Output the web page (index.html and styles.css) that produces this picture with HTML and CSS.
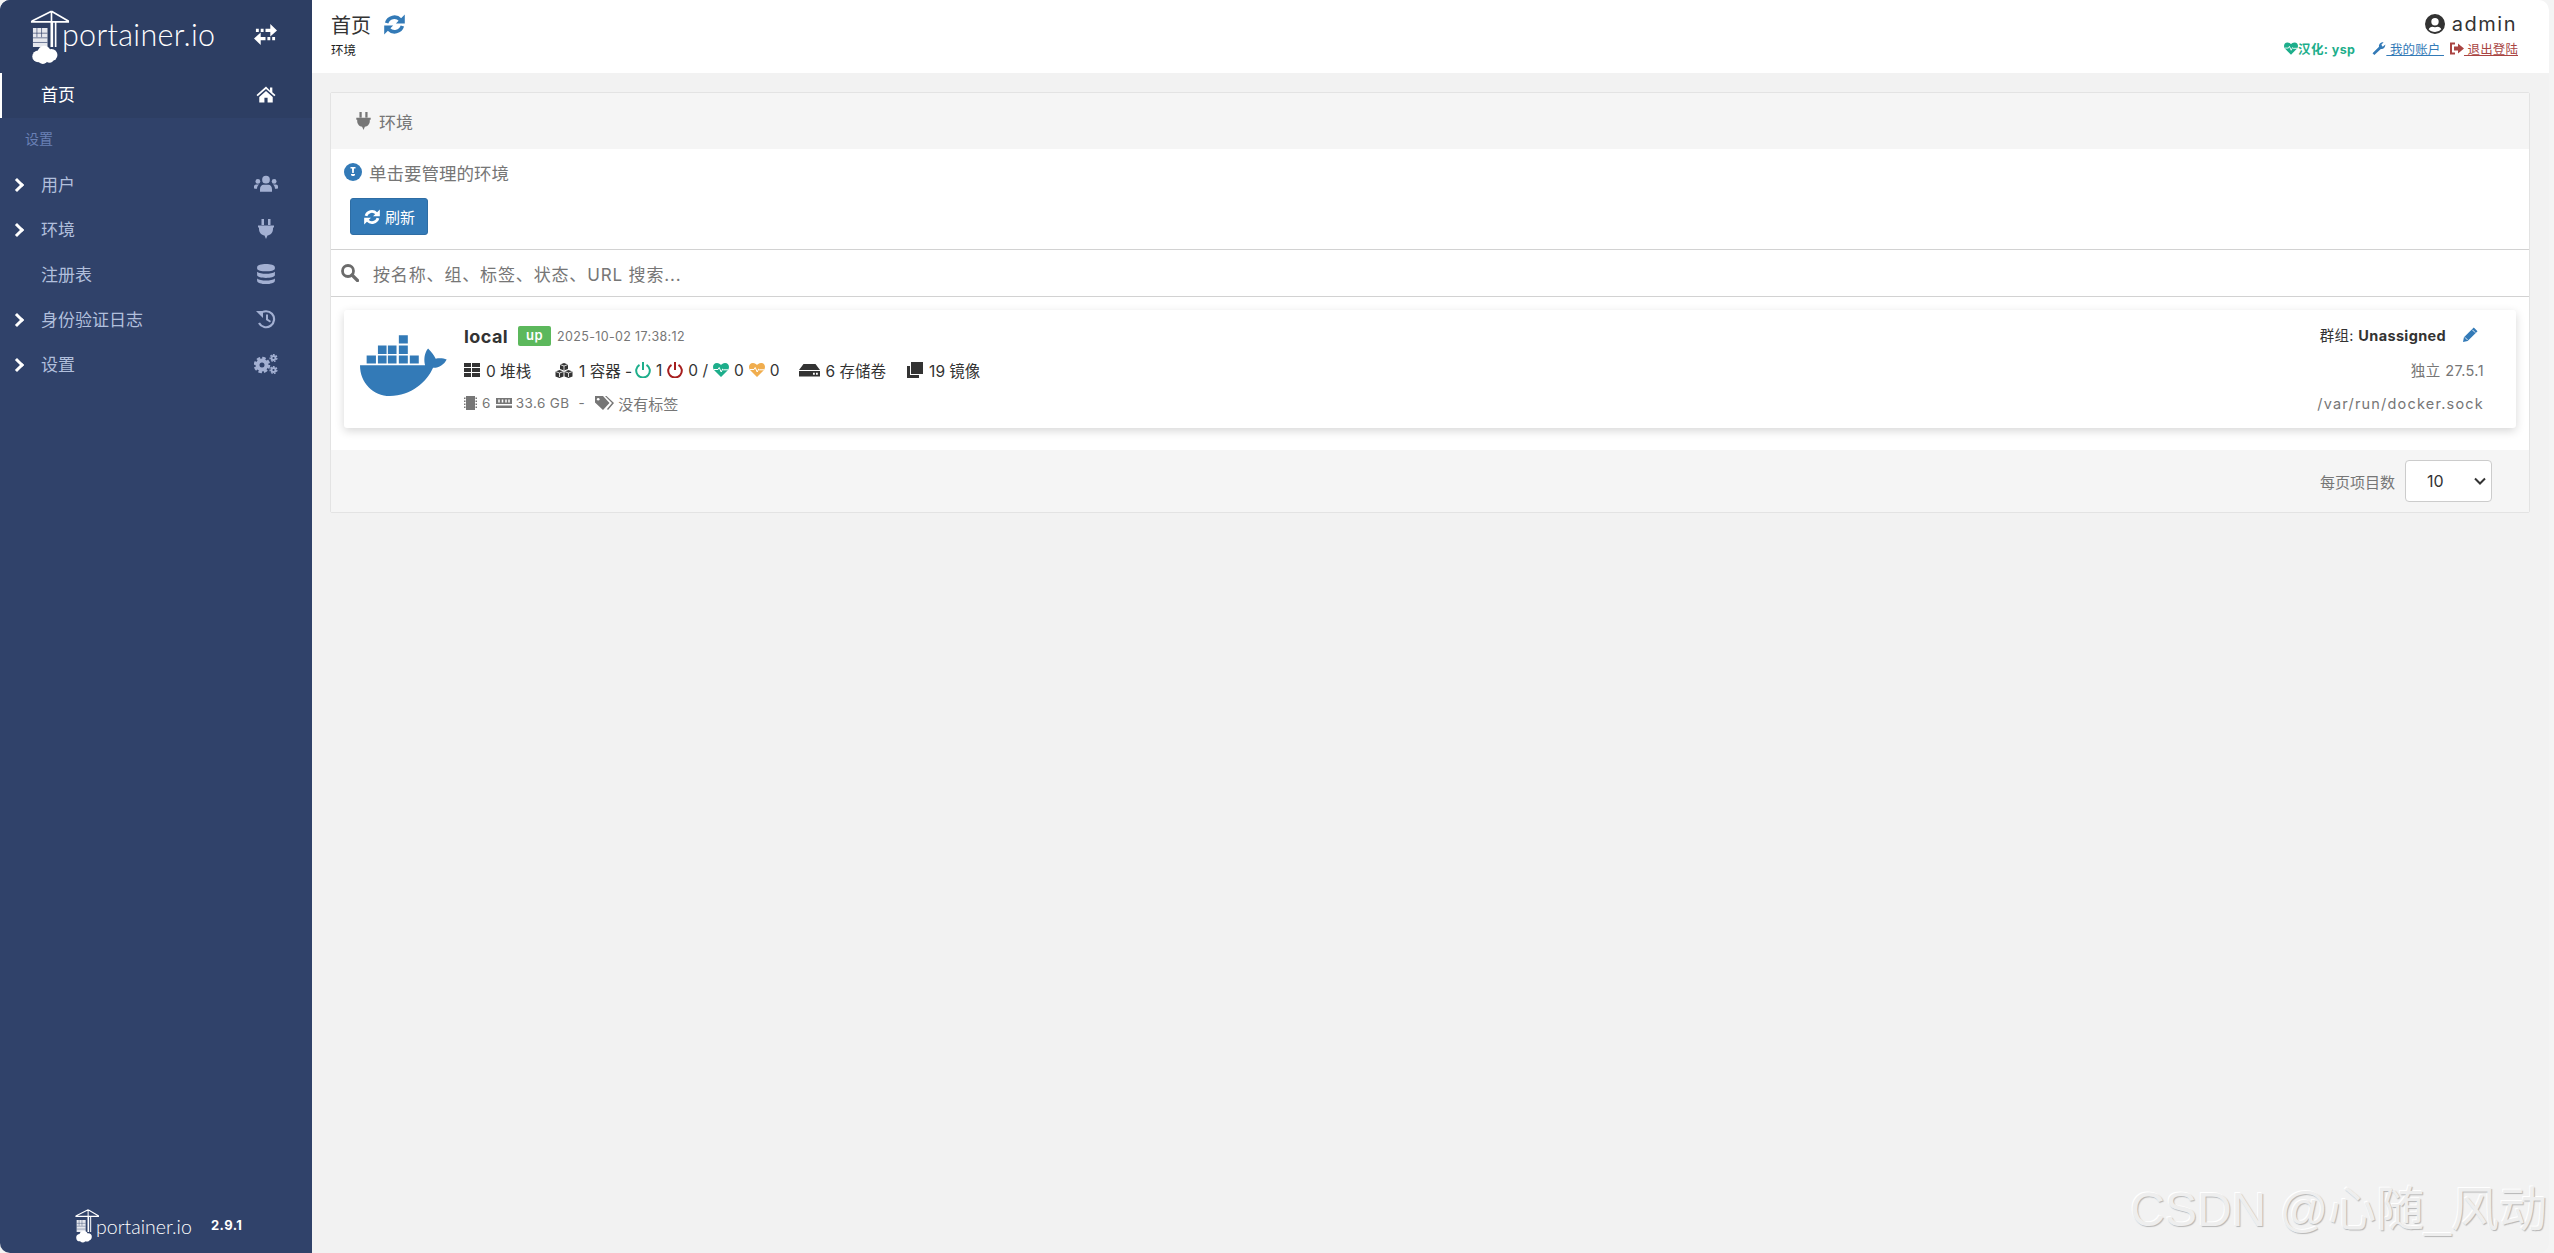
FILE: index.html
```html
<!DOCTYPE html>
<html lang="zh">
<head>
<meta charset="utf-8">
<title>Portainer</title>
<link rel="stylesheet" href="styles.css">
</head>
<body>
<svg class="sprite" xmlns="http://www.w3.org/2000/svg">
  <symbol id="i-crane" viewBox="88 14 122 166">
    <path d="M90 50h115M152 18 92 48M152 18l52 30M152 18v30" fill="none" stroke="#fff" stroke-width="5"/>
    <path d="M149 50h8v76h-8zM162 50h5v76h-5z" fill="#fff"/>
    <path d="M96 68h44v58H96z" fill="#e6e8ee"/>
    <path d="M108 68v28M122 68v28M96 84h44M96 98h44M96 112h44" stroke="#30426a" stroke-width="2" fill="none"/>
    <g fill="#fff"><circle cx="112" cy="154" r="18"/><circle cx="130" cy="142" r="20"/><circle cx="152" cy="150" r="18"/><circle cx="126" cy="162" r="15"/><circle cx="146" cy="160" r="13"/></g>
  </symbol>
  <symbol id="i-exchange" viewBox="0 0 24 24">
    <path d="M2 6h3v3.500H2zM7 6h3v3.500H7zM12 6h5V1l7 6.700-7 6.300V9.500h-5zM22 14.500h-3V18h3zM17 14.500h-3V18h3zM12 14.500H7V10L0 16.300 7 23v-5h5z" fill="currentColor"/>
  </symbol>
  <symbol id="i-home" viewBox="0 0 24 24">
    <path d="M12 2 0 12.500l1.500 1.800L12 5.200l10.500 9.100 1.500-1.800-4-3.500V3h-3v3.800z" fill="currentColor"/>
    <path d="M12 7.500 3.500 15v7H10v-6h4v6h6.500v-7z" fill="currentColor"/>
  </symbol>
  <symbol id="i-users" viewBox="0 0 28 20">
    <circle cx="14" cy="5" r="4.500" fill="currentColor"/><circle cx="4.500" cy="7" r="2.800" fill="currentColor"/><circle cx="23.500" cy="7" r="2.800" fill="currentColor"/>
    <path d="M7 19v-3c0-3 2-5 4-5h6c2 0 4 2 4 5v3zM0 15v-2c0-1.500 1-2.500 2.500-2.500H6c-1.500 1-2.500 3-2.500 5H1zM28 15v-2c0-1.500-1-2.500-2.500-2.500H22c1.500 1 2.500 3 2.500 5H27z" fill="currentColor"/>
  </symbol>
  <symbol id="i-plug" viewBox="0 0 16 20">
    <path d="M3.500 0H6v6H3.500zM10 0h2.500v6H10zM0 6.500h16V8.500h-1V10c0 3.500-2.500 6-5.500 6.500L8 20l-1.500-3.500C3.500 16 1 13.500 1 10V8.500H0z" fill="currentColor"/>
  </symbol>
  <symbol id="i-db" viewBox="0 0 16 18">
    <path d="M0 3c0-4 16-4 16 0v1c0 3.500-16 3.500-16 0zM0 7c3 2.500 13 2.500 16 0v3c0 3.500-16 3.500-16 0zM0 13c3 2.500 13 2.500 16 0v2c0 4-16 4-16 0z" fill="currentColor"/>
  </symbol>
  <symbol id="i-history" viewBox="0 0 20 20">
    <path d="M4 5a8 8 0 1 1-1 9" fill="none" stroke="currentColor" stroke-width="2.200"/>
    <path d="M0 2h7v7zM10 5.500h2V10l3 2-1 1.500-4-2.500z" fill="currentColor"/>
  </symbol>
  <symbol id="i-cogs" viewBox="0 0 24 20">
    <circle cx="8" cy="11" r="4.500" fill="none" stroke="currentColor" stroke-width="4"/>
    <circle cx="8" cy="11" r="7" fill="none" stroke="currentColor" stroke-width="2.500" stroke-dasharray="3.500 2"/>
    <circle cx="19.500" cy="4" r="2" fill="none" stroke="currentColor" stroke-width="1.800"/>
    <circle cx="19.500" cy="4" r="3.400" fill="none" stroke="currentColor" stroke-width="1.300" stroke-dasharray="1.800 1.200"/>
    <circle cx="19.500" cy="16" r="2" fill="none" stroke="currentColor" stroke-width="1.800"/>
    <circle cx="19.500" cy="16" r="3.400" fill="none" stroke="currentColor" stroke-width="1.300" stroke-dasharray="1.800 1.200"/>
  </symbol>
  <symbol id="i-refresh" viewBox="0 0 20 20">
    <path d="M2.500 8.500A7.700 7.700 0 0 1 15.500 5.500M17.500 11.500A7.700 7.700 0 0 1 4.500 14.500" fill="none" stroke="currentColor" stroke-width="3.400"/>
    <path d="M19.800.5v8.500H11.300zM.2 19.500V11H8.700z" fill="currentColor"/>
  </symbol>
  <symbol id="i-info" viewBox="0 0 18 18">
    <circle cx="9" cy="9" r="9" fill="currentColor"/>
    <path d="M6.500 4h5v1.500h-1.500L9.800 10H8.200L8 5.500H6.500zM7 11h4v1.500h-1V13H8v-.5H7z" fill="#fff"/>
  </symbol>
  <symbol id="i-search" viewBox="0 0 18 18">
    <circle cx="7" cy="7" r="5.500" fill="none" stroke="currentColor" stroke-width="2.800"/>
    <path d="m11 11 5.500 5.500" stroke="currentColor" stroke-width="3.200" stroke-linecap="round"/>
  </symbol>
  <symbol id="i-th" viewBox="0 0 16 14">
    <path d="M0 0h7v4H0zM8 0h8v4H8zM0 5h7v4H0zM8 5h8v4H8zM0 10h7v4H0zM8 10h8v4H8z" fill="currentColor"/>
  </symbol>
  <symbol id="i-cubes" viewBox="0 0 18 15">
    <path d="M9 0l4 1.500v4.500L9 7.500 5 6V1.500zM4.500 7 8.500 8.500v5L4.500 15 .5 13.500v-5zM13.500 7l4 1.500v5l-4 1.500-4-1.500v-5z" fill="currentColor"/>
    <path d="M5 1.500 9 3l4-1.500M.5 8.500l4 1.500 4-1.500M9.500 8.500l4 1.500 4-1.500M9 3v4M4.500 10v4M13.500 10v4" stroke="#fff" stroke-width=".8" fill="none"/>
  </symbol>
  <symbol id="i-power" viewBox="0 0 16 16">
    <path d="M4.500 2.800a6.800 6.800 0 1 0 7 0" fill="none" stroke="currentColor" stroke-width="2"/>
    <path d="M8 0v8" stroke="currentColor" stroke-width="2"/>
  </symbol>
  <symbol id="i-heart" viewBox="0 0 16 14">
    <path d="M8 14 1 7C-1 4.500 0 0 4 0c2 0 3 1 4 2 1-1 2-2 4-2 4 0 5 4.500 3 7z" fill="currentColor"/>
    <path d="M1 6.500h4l1.200-2 2 4.500 1.500-3 .8.800H15" fill="none" stroke="#fff" stroke-width="1"/>
  </symbol>
  <symbol id="i-hdd" viewBox="0 0 21 14">
    <path d="M4.500 1h12L21 7H0zM0 8h21v5.500H0zM14 9.800v2h1.800v-2zM17 9.800v2h1.800v-2z" fill="currentColor" fill-rule="evenodd"/>
  </symbol>
  <symbol id="i-clone" viewBox="0 0 16 16">
    <path d="M4 0h12v12H4zM0 4h3v9h9v3H0z" fill="currentColor"/>
  </symbol>
  <symbol id="i-chip" viewBox="0 0 13 14">
    <path d="M2 0h9v14H2zM0 1.500h1.500v1.500H0zM0 4.500h1.500V6H0zM0 7.500h1.500V9H0zM0 10.500h1.500V12H0zM11.500 1.500H13v1.500h-1.500zM11.500 4.500H13V6h-1.500zM11.500 7.500H13V9h-1.500zM11.500 10.500H13V12h-1.500z" fill="currentColor"/>
  </symbol>
  <symbol id="i-memory" viewBox="0 0 16 10">
    <path d="M0 0h16v6H0zM0 7.500h16V10H0z" fill="currentColor"/>
    <path d="M3 1.500v3M6.500 1.500v3M10 1.500v3M13 1.500v3" stroke="#fff" stroke-width="1.500"/>
  </symbol>
  <symbol id="i-tags" viewBox="0 0 19 14">
    <path d="M0 0h8l6.500 7-6.500 7L0 6.500zM10 0h1.500L19 7l-6 7-1-1 5-6z" fill="currentColor"/>
    <circle cx="3.200" cy="3.200" r="1.300" fill="#fff"/>
  </symbol>
  <symbol id="i-pencil" viewBox="0 0 16 16">
    <path d="M11.500.5 15.500 4.500 5 15 0 16l1-5zM10 3.500l2.500 2.500" fill="currentColor"/>
    <path d="m10 3 3 3M2 11l3 3" stroke="#fff" stroke-width=".9"/>
  </symbol>
  <symbol id="i-wrench" viewBox="0 0 14 14">
    <path d="M0 12 7 5C6.500 2 9 0 12 .2L9.500 3l1.500 2 2.800-2.300C14 6 11.500 8 9 7.500L2 14z" fill="currentColor"/>
  </symbol>
  <symbol id="i-signout" viewBox="0 0 14 12">
    <path d="M5 0v2H2v8h3v2H0V0zM8 1l6 5-6 5V8H4V4h4z" fill="currentColor"/>
  </symbol>
  <symbol id="i-user" viewBox="0 0 20 20">
    <path d="M10 0a10 10 0 1 0 0 20 10 10 0 0 0 0-20zm0 4a3.700 3.700 0 1 1 0 7.400A3.700 3.700 0 0 1 10 4zm0 14c-2.500 0-4.800-1-6.300-2.800.6-1.500 2-2.500 3.500-2.500.9.300 1.800.5 2.800.5s1.900-.2 2.800-.5c1.500 0 2.900 1 3.500 2.500A8.300 8.300 0 0 1 10 18z" fill="currentColor" fill-rule="evenodd"/>
  </symbol>
  <symbol id="i-docker" viewBox="90 107 262 185">
    <path d="M207 107h27v25h-27zM144 138h26v25h-26zM174 138h26v25h-26zM207 138h27v25h-27zM110 168h28v24h-28zM144 168h26v24h-26zM174 168h26v24h-26zM207 168h27v24h-27zM240 168h27v24h-27z" fill="#337ab7"/>
    <path d="M90 197h196c-4-14-3-36 9-50 8 8 18 20 23 31 12-3 24-1 33 2-8 16-24 26-41 25-18 42-66 85-130 85-50 0-90-40-90-93z" fill="#337ab7"/>
  </symbol>
</svg>

<div class="app">
  <aside class="sidebar">
    <div class="brand">
      <div class="logo">
        <svg class="logo-mark"><use href="#i-crane"/></svg>
        <span class="logo-text">portainer.io</span>
      </div>
      <svg class="swap"><use href="#i-exchange"/></svg>
    </div>
    <nav class="nav">
      <a class="nav-item nav-active"><span class="nav-label">首页</span><svg class="nav-icon nav-home"><use href="#i-home"/></svg></a>
      <div class="nav-title">设置</div>
      <a class="nav-item"><span class="chev"></span><span class="nav-label">用户</span><svg class="nav-icon"><use href="#i-users"/></svg></a>
      <a class="nav-item"><span class="chev"></span><span class="nav-label">环境</span><svg class="nav-icon"><use href="#i-plug"/></svg></a>
      <a class="nav-item"><span class="nav-label">注册表</span><svg class="nav-icon"><use href="#i-db"/></svg></a>
      <a class="nav-item"><span class="chev"></span><span class="nav-label">身份验证日志</span><svg class="nav-icon"><use href="#i-history"/></svg></a>
      <a class="nav-item"><span class="chev"></span><span class="nav-label">设置</span><svg class="nav-icon"><use href="#i-cogs"/></svg></a>
    </nav>
    <div class="side-foot">
      <svg class="foot-mark"><use href="#i-crane"/></svg>
      <span class="foot-text">portainer.io</span>
      <span class="foot-ver">2.9.1</span>
    </div>
  </aside>

  <main class="main">
    <header class="topbar">
      <div class="crumbs">
        <div class="crumb-title"><span>首页</span><svg class="crumb-refresh"><use href="#i-refresh"/></svg></div>
        <div class="crumb-sub">环境</div>
      </div>
      <div class="account">
        <div class="account-user"><svg class="user-icon"><use href="#i-user"/></svg><span>admin</span></div>
        <div class="account-links">
          <span class="credit"><svg class="ico-12"><use href="#i-heart"/></svg>汉化: ysp</span>
          <a class="link-blue"><svg class="ico-12"><use href="#i-wrench"/></svg> 我的账户 </a>
          <a class="link-red"><svg class="ico-12"><use href="#i-signout"/></svg> 退出登陆</a>
        </div>
      </div>
    </header>

    <section class="content">
      <div class="widget">
        <div class="widget-head"><svg class="head-icon"><use href="#i-plug"/></svg><span>环境</span></div>
        <div class="widget-intro">
          <div class="hint"><svg class="hint-icon"><use href="#i-info"/></svg><span>单击要管理的环境</span></div>
          <button class="btn"><svg class="btn-icon"><use href="#i-refresh"/></svg><span>刷新</span></button>
        </div>
        <div class="searchbar"><svg class="search-icon"><use href="#i-search"/></svg><span>按名称、组、标签、状态、URL 搜索...</span></div>
        <div class="list">
          <article class="card">
            <svg class="docker"><use href="#i-docker"/></svg>
            <div class="card-main">
              <div class="row-a"><span class="name">local</span><span class="badge">up</span><span class="stamp">2025-10-02 17:38:12</span></div>
              <div class="row-b">
                <span class="stat stat-stack"><svg class="s16"><use href="#i-th"/></svg>0 堆栈</span>
                <span class="stat stat-cont"><svg class="s18"><use href="#i-cubes"/></svg>1 容器 -</span>
                <svg class="s16 green"><use href="#i-power"/></svg><span class="mini">1</span>
                <svg class="s16 red"><use href="#i-power"/></svg><span class="mini">0 /</span>
                <svg class="s16 green"><use href="#i-heart"/></svg><span class="mini">0</span>
                <svg class="s16 amber"><use href="#i-heart"/></svg><span class="mini mini-last">0</span>
                <span class="stat stat-vol"><svg class="s21"><use href="#i-hdd"/></svg>6 存储卷</span>
                <span class="stat"><svg class="s16"><use href="#i-clone"/></svg>19 镜像</span>
              </div>
              <div class="row-c">
                <svg class="s13"><use href="#i-chip"/></svg><span class="c-6">6</span>
                <svg class="s16m"><use href="#i-memory"/></svg><span class="c-mem">33.6 GB</span>
                <span class="c-dash">-</span>
                <svg class="s18t"><use href="#i-tags"/></svg><span class="c-tag">没有标签</span>
              </div>
            </div>
            <div class="card-side">
              <div class="group"><span>群组: <b>Unassigned</b></span><svg class="pencil"><use href="#i-pencil"/></svg></div>
              <div class="side-line">独立 27.5.1</div>
              <div class="side-line side-sock">/var/run/docker.sock</div>
            </div>
          </article>
        </div>
        <div class="widget-foot">
          <span class="per-page">每页项目数</span>
          <div class="select"><span>10</span><svg class="caret" viewBox="0 0 12 8"><path d="M1 1.500 6 6.500l5-5" fill="none" stroke="currentColor" stroke-width="2"/></svg></div>
        </div>
      </div>
    </section>
    <div class="watermark">CSDN @心随_风动</div>
  </main>
</div>
</body>
</html>
```
FILE: styles.css
```css
* { box-sizing: border-box; }
html, body { margin: 0; height: 100%; }
html { background: #f4f4f4; }
body {
  font-family: Inter, "Noto Sans CJK SC", sans-serif;
  color: #333;
  overflow: hidden;
}
.sprite { display: none; }
svg { display: block; flex: none; }

.app {
  display: flex;
  height: 1253px;
  width: 2549px;
  border-radius: 10px;
  overflow: hidden;
  background: #f2f2f2;
}

/* sidebar */
.sidebar {
  width: 312px;
  flex: none;
  background: #30426a;
  display: flex;
  flex-direction: column;
}
.brand {
  height: 73px;
  background: #2d3e63;
  display: flex;
  align-items: center;
  padding-left: 30px;
}
.logo { display: flex; align-items: center; width: 224px; height: 60px; }
.logo-mark { width: 41px; height: 55px; margin-right: -9px; margin-top: 2px; color: #fff; }
.logo-text {
  font-family: Lato, sans-serif;
  font-weight: 300;
  font-size: 30.500px;
  letter-spacing: .3px;
  color: #fff;
  margin-top: -6px;
}
.swap { width: 23px; height: 23px; color: #fff; margin-top: -5px; }

.nav { display: flex; flex-direction: column; }
.nav-item {
  height: 45px;
  display: flex;
  align-items: center;
  color: #b1bfdc;
  font-size: 17px;
  padding-left: 41px;
  padding-bottom: 5px;
  position: relative;
}
.nav-active {
  background: #2d3e63;
  color: #fff;
  border-left: 2px solid #fff;
  padding-left: 39px;
}
.nav-label { flex: 1; }
.nav-icon { width: 24px; height: 20px; margin-right: 34px; margin-top: 2px; color: #a3b0d2; }
.nav-home { color: #fff; height: 19px; }
.nav-title {
  height: 45px;
  line-height: 42px;
  padding-left: 25px;
  font-size: 14px;
  color: #6a80b5;
}
.chev {
  position: absolute;
  left: 12px;
  top: 17px;
  width: 10px;
  height: 10px;
  border-top: 3px solid #fff;
  border-right: 3px solid #fff;
  transform: rotate(45deg);
}
.side-foot {
  margin-top: auto;
  height: 50px;
  display: flex;
  align-items: center;
  padding: 0 0 4px 75px;
  color: #e6e9f2;
}
.foot-mark { width: 25px; height: 36px; color: #fff; margin-right: -4px; }
.foot-text {
  font-family: Lato, sans-serif;
  font-weight: 300;
  font-size: 19.500px;
  color: #fff;
  width: 115px;
}
.foot-ver { font-size: 13px; font-weight: 700; color: #fff; letter-spacing: .4px; margin-top: -2px; }

/* main */
.main { flex: 1; min-width: 0; display: flex; flex-direction: column; position: relative; }
.topbar {
  height: 73px;
  background: #fff;
  display: flex;
  justify-content: space-between;
  padding: 9px 4px 0 19px;
  flex: none;
}
.crumb-title { display: flex; align-items: center; font-size: 20px; height: 30px; color: #333; }
.crumb-refresh { width: 21px; height: 21px; margin-left: 13px; margin-top: 1px; color: #337ab7; }
.crumb-sub { font-size: 12.500px; margin-top: 1px; color: #222; }
.account { display: flex; flex-direction: column; align-items: flex-end; padding-right: 28px; }
.account-user { display: flex; align-items: center; font-size: 20px; letter-spacing: 1.500px; height: 32px; margin-top: -1px; color: #333; }
.user-icon { width: 20px; height: 20px; margin-right: 7px; color: #333; }
.account-links { display: flex; align-items: center; font-size: 12.500px; height: 16px; margin-right: -1px; letter-spacing: .1px; }
.ico-12 { width: 14px; height: 13px; }
.credit { display: flex; align-items: center; color: #1dae8b; font-weight: 700; margin-right: 17px; letter-spacing: .4px; }
.link-blue, .link-red { display: flex; align-items: center; text-decoration: underline; white-space: pre; }
.link-blue { color: #337ab7; margin-right: 6px; }
.link-red { color: #a94442; }

.content { padding: 19px 19px 0 18px; }
.widget {
  background: #fff;
  border: 1px solid #e3e3e3;
  border-radius: 2px;
  height: 421px;
  display: flex;
  flex-direction: column;
}
.widget-head {
  height: 56px;
  background: #f5f5f5;
  flex: none;
  display: flex;
  align-items: center;
  padding-left: 25px;
  font-size: 17px;
  color: #767676;
}
.head-icon { width: 15px; height: 18px; margin-right: 8px; color: #767676; }
.widget-intro { height: 101px; flex: none; padding: 13px 0 0 13px; border-bottom: 1px solid #d2d2d2; }
.hint { display: flex; align-items: center; font-size: 17.500px; color: #767676; height: 20px; }
.hint-icon { width: 18px; height: 18px; margin-right: 7px; color: #337ab7; }
.btn {
  display: flex;
  align-items: center;
  margin: 16px 0 0 6px;
  width: 78px;
  height: 37px;
  padding: 0 0 0 13px;
  background: #337ab7;
  border: 1px solid #2e6da4;
  border-radius: 3px;
  color: #fff;
  font: inherit;
  font-size: 15px;
}
.btn-icon { width: 16px; height: 16px; margin-right: 5px; }
.searchbar {
  height: 47px;
  flex: none;
  display: flex;
  align-items: center;
  padding-left: 10px;
  border-bottom: 1px solid #d2d2d2;
  color: #767676;
  font-size: 17px;
  letter-spacing: .85px;
}
.search-icon { width: 18px; height: 18px; margin-right: 14px; color: #6b6b6b; }
.list { flex: 1; padding: 13px 13px 0 13px; }
.card {
  height: 118px;
  background: #fff;
  border-radius: 3px;
  box-shadow: 0 3px 10px rgba(0,0,0,.16);
  display: flex;
  padding: 0 32px 0 16px;
}
.docker { width: 87px; height: 62px; margin: 25px 17px 0 0; }
.card-main { flex: 1; padding-top: 15px; font-size: 15px; }
.row-a { display: flex; align-items: center; height: 22px; }
.name { font-weight: 700; font-size: 18px; letter-spacing: .4px; color: #333; width: 54px; }
.badge {
  width: 33px;
  height: 20px;
  background: #5cb85c;
  border-radius: 2px;
  color: #fff;
  font-size: 13px;
  font-weight: 600;
  line-height: 19px;
  text-align: center;
  letter-spacing: .5px;
}
.stamp { margin-left: 6px; font-size: 12.500px; color: #767676; letter-spacing: .35px; }
.row-b { display: flex; align-items: center; height: 22px; margin-top: 12px; color: #333; font-size: 15.500px; }
.stat { display: flex; align-items: center; }
.stat svg { margin-right: 6px; }
.stat-stack { width: 91px; }
.stat-cont { width: 80px; }
.s16 { width: 16px; height: 16px; color: #333; }
.s18 { width: 18px; height: 15px; }
.s21 { width: 21px; height: 14px; }
.green { color: #1dae8b; }
.red { color: #a61e1e; }
.amber { color: #f0ad4e; }
.mini { margin: 0 5px; white-space: pre; }
.mini-last { margin-right: 19px; }
.stat-vol { margin-right: 21px; }
.row-c { display: flex; align-items: center; height: 20px; margin-top: 12px; color: #767676; font-size: 13.500px; letter-spacing: .4px; }
.s13 { width: 13px; height: 14px; margin-right: 5px; }
.s16m { width: 16px; height: 10px; margin-left: 5px; margin-right: 4px; }
.c-dash { margin: 0 10px 0 9px; }
.s18t { width: 19px; height: 14px; margin-right: 4px; }
.c-tag { font-size: 15px; letter-spacing: 0; }
.card-side { display: flex; flex-direction: column; align-items: flex-end; padding-top: 13px; font-size: 14.500px; color: #767676; }
.group { display: flex; align-items: center; height: 22px; margin-right: 6px; color: #333; font-size: 14.500px; letter-spacing: .35px; white-space: nowrap; }
.pencil { width: 15px; height: 15px; margin-left: 17px; color: #337ab7; }
.side-line { height: 22px; margin-top: 15px; line-height: 22px; white-space: nowrap; letter-spacing: .4px; }
.side-sock { margin-top: 11px; letter-spacing: 1.200px; }
.widget-foot {
  height: 62px;
  flex: none;
  background: #f5f5f5;
  display: flex;
  align-items: center;
  justify-content: flex-end;
  padding-right: 37px;
  color: #767676;
  font-size: 15px;
}
.per-page { margin-right: 10px; }
.select {
  width: 87px;
  height: 42px;
  background: #fff;
  border: 1px solid #ccc;
  border-radius: 4px;
  display: flex;
  align-items: center;
  justify-content: space-between;
  padding: 0 5px 0 21px;
  color: #333;
  font-size: 16px;
}
.caret { width: 12px; height: 8px; }
.watermark {
  position: absolute;
  right: 2px;
  bottom: 13px;
  font-family: "Liberation Sans", "Noto Sans CJK SC", sans-serif;
  font-size: 48px;
  color: #eeeeee;
  text-shadow: 1px 1px 1px #b5b5b5, -1px -1px 0 #fff;
  white-space: nowrap;
}
```
